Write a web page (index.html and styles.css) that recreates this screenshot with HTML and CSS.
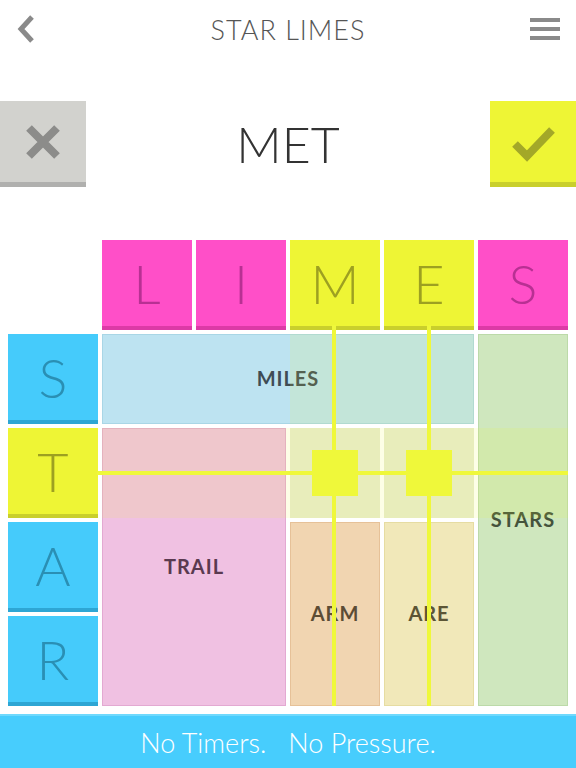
FILE: index.html
```html
<!DOCTYPE html>
<html lang="en">
<head>
    <meta charset="UTF-8">
    <meta name="viewport" content="width=device-width, initial-scale=1.0">
    <title>Star Limes</title>
    <link rel="stylesheet" href="styles.css">
</head>
<body>
    <header class="topbar">
        <a href="#" class="voltar">
            <svg width="20" height="30" viewBox="0 0 20 30"><path d="M16 3 L5 15 L16 27" fill="none" stroke="#8a8a8a" stroke-width="5"/></svg>
        </a>
        <h1 class="titulo">STAR LIMES</h1>
        <a href="#" class="menu">
            <span></span><span></span><span></span>
        </a>
    </header>

    <section class="acoes">
        <button class="btn-x">
            <svg width="40" height="40" viewBox="0 0 40 40"><path d="M6 6 L34 34 M34 6 L6 34" stroke="#8c8c8a" stroke-width="8"/></svg>
        </button>
        <div class="palavra">MET</div>
        <button class="btn-ok">
            <svg width="46" height="40" viewBox="0 0 46 40"><path d="M5 22 L17 34 L42 8" fill="none" stroke="#a3a828" stroke-width="8"/></svg>
        </button>
    </section>

    <main class="tabuleiro">
        <div class="letra rosa c2">L</div>
        <div class="letra rosa c3">I</div>
        <div class="letra amarelo c4">M</div>
        <div class="letra amarelo c5">E</div>
        <div class="letra rosa c6">S</div>

        <div class="letra azul r2">S</div>
        <div class="letra amarelo r3">T</div>
        <div class="letra azul r4">A</div>
        <div class="letra azul r5">R</div>

        <div class="palavra-cel miles">MILES</div>
        <div class="palavra-cel trail">TRAIL</div>
        <div class="palavra-cel vazio v4"></div>
        <div class="palavra-cel vazio v5"></div>
        <div class="palavra-cel arm">ARM</div>
        <div class="palavra-cel are">ARE</div>
        <div class="palavra-cel stars">STARS</div>

        <div class="realce realce-linha"></div>
        <div class="realce realce-coluna"></div>

        <div class="linha-v lv1"></div>
        <div class="linha-v lv2"></div>
        <div class="linha-h"></div>
        <div class="cruz cz1"></div>
        <div class="cruz cz2"></div>
    </main>

    <footer class="rodape">No Timers.&nbsp;&nbsp; No Pressure.</footer>
</body>
</html>
```

FILE: styles.css
```css
body, html{
    border: 0;
    margin: 0;
    padding: 0;
    background-color: white;
    font-family: Lato, "Open Sans", sans-serif;
}
.topbar{
    height: 58px;
    display: flex;
    align-items: center;
    justify-content: space-between;
    padding: 0 16px 0 16px;
}
.voltar{
    display: flex;
    width: 30px;
}
.titulo{
    margin: 0;
    font-size: 27px;
    font-weight: 300;
    letter-spacing: 1px;
    color: #555;
}
.menu{
    display: flex;
    flex-direction: column;
    gap: 5px;
    width: 30px;
}
.menu span{
    height: 4px;
    background-color: #8a8a8a;
}
.acoes{
    margin-top: 43px;
    height: 86px;
    display: flex;
    align-items: center;
    justify-content: space-between;
}
.acoes button{
    width: 86px;
    height: 86px;
    border: none;
    padding: 0;
    display: flex;
    align-items: center;
    justify-content: center;
    cursor: pointer;
}
.btn-x{
    background-color: #d2d2ce;
    border-bottom: 5px solid #b0b0ae !important;
}
.btn-ok{
    background-color: #eef535;
    border-bottom: 5px solid #c9cf2c !important;
}
.palavra{
    font-size: 50px;
    font-weight: 300;
    color: #333;
}
.tabuleiro{
    position: relative;
    margin: 53px 0 0 8px;
    display: grid;
    grid-template-columns: repeat(6, 90px);
    grid-template-rows: repeat(5, 90px);
    gap: 4px;
}
.letra{
    box-sizing: border-box;
    display: flex;
    align-items: center;
    justify-content: center;
    font-size: 54px;
    font-weight: 300;
}
.rosa{
    background-color: #ff4fc8;
    border-bottom: 4px solid #dc3aa6;
    color: #b83093;
}
.amarelo{
    background-color: #eef535;
    border-bottom: 4px solid #c9cf2c;
    color: #9da021;
}
.azul{
    background-color: #45cbfb;
    border-bottom: 4px solid #2ea6d4;
    color: #2a8fb4;
}
.c2{ grid-column: 2; grid-row: 1; }
.c3{ grid-column: 3; grid-row: 1; }
.c4{ grid-column: 4; grid-row: 1; }
.c5{ grid-column: 5; grid-row: 1; }
.c6{ grid-column: 6; grid-row: 1; }
.r2{ grid-column: 1; grid-row: 2; }
.r3{ grid-column: 1; grid-row: 3; }
.r4{ grid-column: 1; grid-row: 4; }
.r5{ grid-column: 1; grid-row: 5; }

.palavra-cel{
    box-sizing: border-box;
    display: flex;
    align-items: center;
    justify-content: center;
    padding-bottom: 3px;
    font-size: 20px;
    font-weight: 700;
    letter-spacing: 1px;
    color: #4a4a4a;
}
.miles{
    grid-column: 2 / 6;
    grid-row: 2;
    background-color: #bde3f1;
    border: 1px solid #a9d6e6;
    color: #3f4c55;
}
.trail{
    grid-column: 2 / 4;
    grid-row: 3 / 6;
    background-color: #f0c1e2;
    border: 1px solid #e3a9d2;
    color: #5a3a50;
}
.vazio{
    grid-row: 3;
    background-color: #e8ecce;
}
.v4{ grid-column: 4; }
.v5{ grid-column: 5; }
.arm{
    grid-column: 4;
    grid-row: 4 / 6;
    background-color: #f1d5b1;
    border: 1px solid #e6c198;
    color: #5c4c35;
}
.are{
    grid-column: 5;
    grid-row: 4 / 6;
    background-color: #f1e8b9;
    border: 1px solid #e6dca2;
    color: #5c5535;
}
.stars{
    grid-column: 6;
    grid-row: 2 / 6;
    background-color: #cfe7be;
    border: 1px solid #bcdaa9;
    color: #44533c;
}

/* realces e linhas por cima da grade */
.realce{
    position: absolute;
    background-color: rgba(238, 245, 53, 0.12);
}
.realce-linha{
    left: 94px;
    top: 188px;
    width: 466px;
    height: 90px;
}
.realce-coluna{
    left: 282px;
    top: 94px;
    width: 184px;
    height: 90px;
}
.linha-v{
    position: absolute;
    top: 85px;
    width: 4px;
    height: 381px;
    background-color: #eff83a;
}
.lv1{ left: 324px; }
.lv2{ left: 419px; }
.linha-h{
    position: absolute;
    left: 89px;
    top: 231px;
    width: 471px;
    height: 4px;
    background-color: #eff83a;
}
.cruz{
    position: absolute;
    top: 210px;
    width: 46px;
    height: 46px;
    background-color: #eff83a;
}
.cz1{ left: 304px; }
.cz2{ left: 398px; }

.rodape{
    margin-top: 8px;
    height: 54px;
    background-color: #47cdfd;
    border-top: 2px solid #6fd9fd;
    box-sizing: border-box;
    display: flex;
    align-items: center;
    justify-content: center;
    color: white;
    font-size: 27px;
    font-weight: 300;
}
```
